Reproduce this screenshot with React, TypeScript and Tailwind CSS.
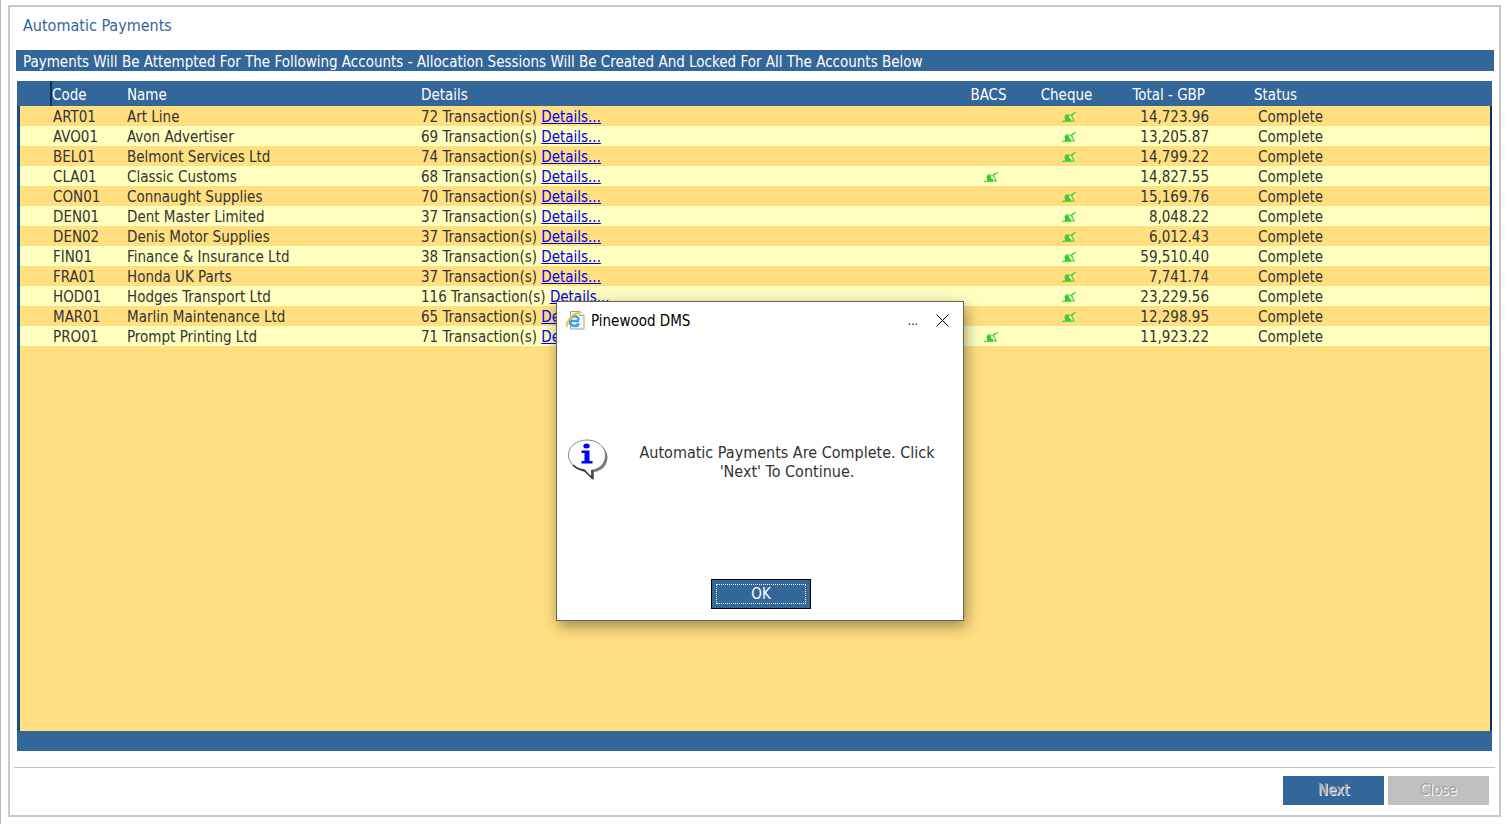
type Payment = {
  code: string;
  name: string;
  count: number;
  method: 'bacs' | 'cheque';
  total: string;
};

const payments: Payment[] = [
  { code: 'ART01', name: 'Art Line', count: 72, method: 'cheque', total: '14,723.96' },
  { code: 'AVO01', name: 'Avon Advertiser', count: 69, method: 'cheque', total: '13,205.87' },
  { code: 'BEL01', name: 'Belmont Services Ltd', count: 74, method: 'cheque', total: '14,799.22' },
  { code: 'CLA01', name: 'Classic Customs', count: 68, method: 'bacs', total: '14,827.55' },
  { code: 'CON01', name: 'Connaught Supplies', count: 70, method: 'cheque', total: '15,169.76' },
  { code: 'DEN01', name: 'Dent Master Limited', count: 37, method: 'cheque', total: '8,048.22' },
  { code: 'DEN02', name: 'Denis Motor Supplies', count: 37, method: 'cheque', total: '6,012.43' },
  { code: 'FIN01', name: 'Finance & Insurance Ltd', count: 38, method: 'cheque', total: '59,510.40' },
  { code: 'FRA01', name: 'Honda UK Parts', count: 37, method: 'cheque', total: '7,741.74' },
  { code: 'HOD01', name: 'Hodges Transport Ltd', count: 116, method: 'cheque', total: '23,229.56' },
  { code: 'MAR01', name: 'Marlin Maintenance Ltd', count: 65, method: 'cheque', total: '12,298.95' },
  { code: 'PRO01', name: 'Prompt Printing Ltd', count: 71, method: 'bacs', total: '11,923.22' },
];

function SignedIcon() {
  return (
    <svg width="14" height="10" viewBox="0 0 14 10" className="mx-auto block" role="img" aria-label="Yes">
      <path d="M0 9.300h3l1.500-2M9.500 3.500l2-2L14 .3" stroke="#4fcf45" strokeWidth="1.200" fill="none" />
      <path d="M3 3.500h4v3h2v3H3z" fill="#33cc33" />
      <path d="M3.500 3h6l2-1.500M9.500 3.500l2.500 5.500H4M2.500 5.500l2-2.500" stroke="#3fcf3f" strokeWidth="1.200" fill="none" />
      <path d="M7.300 4h1.700l1.500 3.500H9z" fill="#eef7b0" />
    </svg>
  );
}

function PageIcon() {
  return (
    <svg width="19" height="19" viewBox="0 0 19 19" aria-hidden="true">
      <path d="M4.500 .5h9.500l4 4v13.500h-13.500z" fill="#f6f6f6" stroke="#a3a3a3" />
      <path d="M14 .5v4h4" fill="#fff" stroke="#a3a3a3" />
      <path d="M13 10H4a4.400 4.400 0 0 1 8.800-.6" fill="none" stroke="#3ba3dc" strokeWidth="2.400" />
      <path d="M3.600 9.500c0 6 7 7 9 3" fill="none" stroke="#3ba3dc" strokeWidth="2.800" />
      <path d="M1.500 16C-1 13 5 3.500 11.500 2c2-.3 2.500 1 1.800 2.500" fill="none" stroke="#f2c62e" strokeWidth="1.800" />
    </svg>
  );
}

function InfoIcon() {
  return (
    <svg width="42" height="42" viewBox="0 0 42 42" className="shrink-0" aria-hidden="true">
      <path
        d="M22 3C11 3 3.500 9.500 3.500 18S10 31.500 18 33l9 8v-8c8-1 13.500-7 13.500-15S32 3 22 3z"
        fill="#777"
      />
      <path
        d="M20 1C9.500 1 1.500 7.500 1.500 16S9 30 17 31l8 8v-8c8-1 13.500-7 13.500-15S30.500 1 20 1z"
        fill="#fff"
        stroke="#888"
      />
      <path d="M25 31v8l-8-8c-4-.5-8-2-11-5" fill="none" stroke="#333" strokeWidth="1.500" />
      <ellipse cx="19.500" cy="7" rx="3.200" ry="2.500" fill="#0000f5" />
      <path d="M14.500 11.500H22.500v10.500h3v2.500h-11v-2.500h3v-8h-3z" fill="#0000f5" />
    </svg>
  );
}

function PaymentsTable() {
  return (
    <table className="w-full table-fixed border-separate border-spacing-0 text-left whitespace-nowrap">
      <colgroup>
        <col className="w-[35px]" />
        <col className="w-[73px]" />
        <col className="w-[294px]" />
        <col />
        <col className="w-[78px]" />
        <col className="w-[78px]" />
        <col className="w-[120px]" />
        <col className="w-[264px]" />
      </colgroup>
      <thead>
        <tr className="h-[25px] bg-[#336699] text-white [&>th]:p-0 [&>th]:pt-[2px] [&>th]:leading-5 [&>th]:font-normal">
          <th className="border-r-2 border-[#003366]" />
          <th>Code</th>
          <th>
            <span className="pl-[2px]">Name</span>
          </th>
          <th>
            <span className="pl-[2px]">Details</span>
          </th>
          <th className="text-center">
            <span className="pr-[5px]">BACS</span>
          </th>
          <th className="text-center">
            <span className="pr-[5px]">Cheque</span>
          </th>
          <th className="text-right">
            <span className="pr-[23px]">Total - GBP</span>
          </th>
          <th>
            <span className="pl-[26px]">Status</span>
          </th>
        </tr>
      </thead>
      <tbody>
        {payments.map((p) => (
          <tr
            key={p.code}
            className="h-5 odd:bg-[#ffdf80] even:bg-[#ffffc0] [&>td]:p-0 [&>td]:pt-[2px] [&>td]:leading-[18px]"
          >
            <td className="border-l-[3px] border-[#1a4d80]" />
            <td>
              <span className="pl-px">{p.code}</span>
            </td>
            <td>
              <span className="pl-[2px]">{p.name}</span>
            </td>
            <td>
              <span className="pl-[2px]">{p.count} Transaction(s) </span>
              <a href="#" className="text-[#0000ee] underline">
                Details...
              </a>
            </td>
            <td>{p.method === 'bacs' && <SignedIcon />}</td>
            <td>{p.method === 'cheque' && <SignedIcon />}</td>
            <td className="text-right">
              <span className="pr-[19px]">{p.total}</span>
            </td>
            <td className="border-r-2 border-[#003366]">
              <span className="pl-[30px]">Complete</span>
            </td>
          </tr>
        ))}
      </tbody>
    </table>
  );
}

function MessageDialog() {
  return (
    <div
      role="dialog"
      aria-label="Pinewood DMS"
      className="absolute top-[301px] left-[555px] flex h-[320px] w-[408px] flex-col border border-[#6b6548] bg-white shadow-[2px_5px_14px_rgba(0,0,0,0.4)]"
    >
      <div className="flex h-9 items-center pr-[14px] pl-[9px] text-black">
        <PageIcon />
        <span className="ml-[6px] flex-1 pt-[2px]">Pinewood DMS</span>
        <span className="pt-[2px] text-xs">...</span>
        <button type="button" aria-label="Close dialog" className="ml-[18px]">
          <svg width="13" height="13" viewBox="0 0 13 13" className="block">
            <path d="M.5 .5l12 12M12.500 .5l-12 12" stroke="#000" />
          </svg>
        </button>
      </div>
      <div className="flex flex-1 items-center pt-[2px] pr-[22px] pl-[10px]">
        <InfoIcon />
        <p className="ml-[24px] flex-1 pt-1 text-center text-base leading-[19px]">
          Automatic Payments Are Complete. Click
          <br />
          'Next' To Continue.
        </p>
      </div>
      <button
        type="button"
        className="mb-[11px] ml-[154px] h-[30px] w-[100px] border border-black bg-[#336699] p-1 text-white"
      >
        <span className="block border border-dotted border-white leading-[18px]">OK</span>
      </button>
    </div>
  );
}

export default function App() {
  return (
    <div className="relative flex min-h-screen flex-col border-l border-[#b8b8b8] bg-white pt-[5px] pr-[7px] pb-[7px] pl-[7px] font-['DejaVu_Sans_Condensed','Noto_Sans',sans-serif] text-[15px] text-[#333333]">
      <main className="flex flex-1 flex-col border-2 border-[#c8c8c8] px-1">
        <h1 className="pt-2 pl-[9px] text-base leading-[21px] text-[#336699]">Automatic Payments</h1>
        <h2 className="mt-[14px] mr-px ml-[2px] bg-[#336699] pt-[3px] pl-[7px] leading-[18px] text-white">
          Payments Will Be Attempted For The Following Accounts - Allocation Sessions Will Be Created And Locked For All
          The Accounts Below
        </h2>
        <section className="mx-[3px] mt-[10px] flex flex-1 flex-col">
          <PaymentsTable />
          <div className="flex-1 border-r-2 border-l-[3px] border-r-[#003366] border-l-[#1a4d80] bg-[#ffdf80]" />
          <div className="h-5 bg-[#336699]" />
        </section>
        <footer className="mt-4 flex justify-end gap-1 border-t border-[#c0c0c0] pt-2 pr-[6px] pb-[10px]">
          <button
            type="button"
            disabled
            className="h-[29px] w-[101px] bg-[#336699] text-[#a0a0a0] [text-shadow:1px_1px_0_#fff]"
          >
            Next
          </button>
          <button
            type="button"
            disabled
            className="h-[29px] w-[101px] bg-[#c0c0c0] text-[#a0a0a0] [text-shadow:1px_1px_0_#fff]"
          >
            Close
          </button>
        </footer>
      </main>
      <MessageDialog />
    </div>
  );
}
